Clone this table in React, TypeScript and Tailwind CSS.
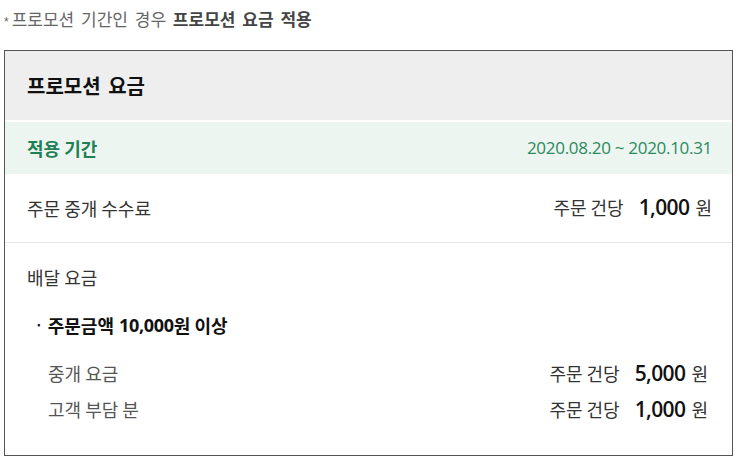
const font = "font-['Malgun_Gothic','Noto_Sans_CJK_KR',sans-serif]";

const Amount = ({ value }: { value: string }) => (
  <span className="flex items-baseline">
    <span className="text-[18px] text-[#333]">주문 건당</span>
    <span className="ml-[15px] text-[21px] font-semibold text-[#111] font-['Open_Sans','Noto_Sans_CJK_KR',sans-serif] tracking-[-0.6px]">
      {value}
    </span>
    <span className="ml-[6px] text-[18px] text-[#333]">원</span>
  </span>
);

export default function App() {
  return (
    <div className={`${font} w-[740px] h-[462px] bg-white pt-[8px]`}>
      <p className="pl-[4px] h-[22px] text-[17px] text-[#666] leading-[22px] [word-spacing:3px]">
        <span className="text-[12px] mr-[3px] font-['Liberation_Sans',sans-serif]">*</span>
        프로모션 기간인 경우 <span className="font-bold text-[#444]">프로모션 요금 적용</span>
      </p>

      <div className="mt-[20px] ml-[4px] w-[729px] h-[406px] border border-[#555] flex flex-col">
        <div className="h-[71px] bg-[#eeeeee] flex items-center px-[22px] border-b-2 border-white">
          <h2 className="text-[20px] font-bold text-[#111] [word-spacing:3px]">프로모션 요금</h2>
        </div>

        <div className="h-[52px] bg-[#edf5f0] flex items-center justify-between pl-[22px] pr-[20px]">
          <span className="text-[18px] font-bold text-[#1f7f55]">적용 기간</span>
          <span className="text-[17px] text-[#2a8a5f] font-['Open_Sans',sans-serif] tracking-[-0.3px]">
            2020.08.20 ~ 2020.10.31
          </span>
        </div>

        <div className="h-[69px] flex items-center justify-between pl-[22px] pr-[20px] border-b border-[#e6e6e6]">
          <span className="text-[18px] text-[#333]">주문 중개 수수료</span>
          <Amount value="1,000" />
        </div>

        <div className="flex flex-col pl-[22px] pr-[24px] pt-[22px]">
          <span className="text-[18px] text-[#333] leading-[24px]">배달 요금</span>
          <div className="mt-[24px] flex items-center text-[18px] font-bold text-[#111] leading-[24px]">
            <span className="ml-[8px] mr-[5px] text-[13px]">·</span>
            주문금액 <span className="ml-[5px] font-['Open_Sans',sans-serif] text-[18px] tracking-[-0.3px]">10,000</span>원 이상
          </div>
          <div className="mt-[24px] pl-[21px] flex flex-col gap-[11px]">
            <div className="flex items-center justify-between h-[25px]">
              <span className="text-[18px] text-[#555]">중개 요금</span>
              <Amount value="5,000" />
            </div>
            <div className="flex items-center justify-between h-[25px]">
              <span className="text-[18px] text-[#555]">고객 부담 분</span>
              <Amount value="1,000" />
            </div>
          </div>
        </div>
      </div>
    </div>
  );
}
